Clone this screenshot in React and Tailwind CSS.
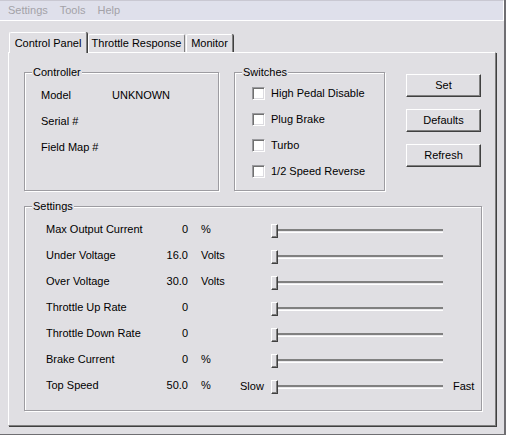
import React from 'react';

const GroupBox = ({ title, className, children }) => (
    <div className={`relative border border-[#9d9ca1] shadow-[1px_1px_0_#ffffff,inset_1px_1px_0_#ffffff] ${className}`}>
        <span className="absolute -top-[7px] left-[7px] px-[1px] bg-[#e0dfe3] leading-[13px]">{title}</span>
        {children}
    </div>
);

const Checkbox = ({ label }) => (
    <div className="flex items-center h-[13px]">
        <div className="w-[13px] h-[13px] bg-white border border-t-[#9a9a9e] border-l-[#9a9a9e] border-r-white border-b-white shadow-[inset_1px_1px_0_#707070,inset_-1px_-1px_0_#dcdbe0]" />
        <span className="ml-[6px]">{label}</span>
    </div>
);

const Button = ({ label }) => (
    <button className="w-[75px] h-[23px] bg-[#e0dfe3] border border-t-white border-l-white border-r-[#404040] border-b-[#404040] shadow-[inset_-1px_-1px_0_#808080] flex items-center justify-center">
        {label}
    </button>
);

const Slider = () => (
    <div className="w-[172px] h-[14px] mt-[4px] flex items-center">
        <div className="w-[7px] h-[14px] bg-[#e0dfe3] border border-t-white border-l-white border-r-[#404040] border-b-[#404040] shadow-[inset_-1px_-1px_0_#808080]" />
        <div className="flex-1 h-[4px] border-t-2 border-t-[#808080] border-b border-b-white bg-[#e8e7ea]" />
    </div>
);

const settings = [
    { label: 'Max Output Current', value: '0', unit: '%' },
    { label: 'Under Voltage', value: '16.0', unit: 'Volts' },
    { label: 'Over Voltage', value: '30.0', unit: 'Volts' },
    { label: 'Throttle Up Rate', value: '0', unit: '' },
    { label: 'Throttle Down Rate', value: '0', unit: '' },
    { label: 'Brake Current', value: '0', unit: '%' },
    { label: 'Top Speed', value: '50.0', unit: '%', ends: true },
];

const App = () => {
    return (
        <div className="w-[506px] h-[435px] bg-[#e0dfe3] border-r-2 border-r-[#6f6e72] border-b border-b-[#6f6e72] overflow-hidden font-['Liberation_Sans',Arial,sans-serif] text-[11px] leading-[13px] text-black">
            {/* Menu */}
            <div className="h-[21px] bg-[#dfe0eb] border-t border-t-[#c9c8d2] border-b border-b-white border-r border-r-white flex items-center pl-[8px] gap-[12px] text-[#a3a2a8]">
                <span>Settings</span>
                <span>Tools</span>
                <span>Help</span>
            </div>

            {/* Tabs */}
            <div className="mt-[11px] h-[20px] pl-[9px] flex items-end">
                <div className="relative z-10 -mb-[1px] w-[78px] h-[21px] bg-[#e0dfe3] border-t border-l border-t-white border-l-white border-r border-r-[#808080] rounded-t-[2px] shadow-[1px_0_0_#404040] flex items-center justify-center">
                    Control Panel
                </div>
                <div className="w-[97px] h-[18px] ml-[1px] bg-[#e0dfe3] border-t border-l border-t-white border-l-white border-r border-r-[#808080] rounded-t-[2px] flex items-center justify-center">
                    Throttle Response
                </div>
                <div className="w-[47px] h-[18px] ml-[1px] bg-[#e0dfe3] border-t border-l border-t-white border-l-white border-r border-r-[#808080] rounded-t-[2px] shadow-[1px_0_0_#404040] flex items-center justify-center">
                    Monitor
                </div>
            </div>

            {/* Panel */}
            <div className="ml-[8px] w-[488px] h-[374px] border-t border-l border-t-white border-l-white border-r border-b border-r-[#808080] border-b-[#808080] shadow-[1px_1px_0_#404040] pl-[15px] pt-[19px]">
                <div className="flex items-start">
                    <GroupBox title="Controller" className="w-[195px] h-[119px]">
                        <div className="pl-[16px] pt-[16px] flex flex-col gap-[13px]">
                            <div className="flex"><span className="w-[71px]">Model</span><span>UNKNOWN</span></div>
                            <div className="flex"><span className="w-[71px]">Serial #</span></div>
                            <div className="flex"><span className="w-[71px]">Field Map #</span></div>
                        </div>
                    </GroupBox>
                    <GroupBox title="Switches" className="ml-[15px] w-[151px] h-[119px]">
                        <div className="pl-[17px] pt-[14px] flex flex-col gap-[13px]">
                            <Checkbox label="High Pedal Disable" />
                            <Checkbox label="Plug Brake" />
                            <Checkbox label="Turbo" />
                            <Checkbox label="1/2 Speed Reverse" />
                        </div>
                    </GroupBox>
                    <div className="ml-[21px] mt-[2px] flex flex-col gap-[12px]">
                        <Button label="Set" />
                        <Button label="Defaults" />
                        <Button label="Refresh" />
                    </div>
                </div>

                <GroupBox title="Settings" className="mt-[15px] w-[458px] h-[205px]">
                    <div className="pl-[21px] pt-[9px]">
                        {settings.map(s => (
                            <div key={s.label} className="h-[26px] flex items-center">
                                <span className="w-[110px]">{s.label}</span>
                                <span className="w-[32px] text-right">{s.value}</span>
                                <span className="ml-[13px] w-[39px]">{s.unit}</span>
                                <span className="w-[31px] mt-[3px]">{s.ends ? 'Slow' : ''}</span>
                                <Slider />
                                <span className="ml-[10px] mt-[3px]">{s.ends ? 'Fast' : ''}</span>
                            </div>
                        ))}
                    </div>
                </GroupBox>
            </div>
        </div>
    );
};

export default App;
